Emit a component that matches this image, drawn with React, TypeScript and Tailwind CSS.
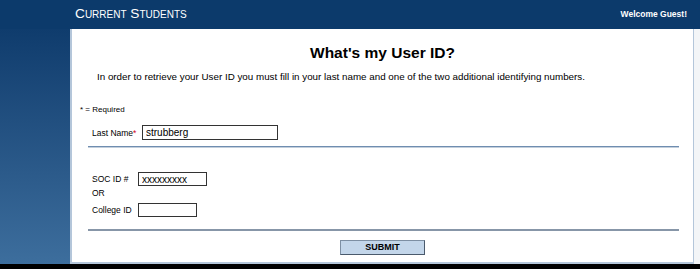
import React, { useState } from 'react';

export default function App() {
  const [lastName, setLastName] = useState('strubberg');
  const [socId, setSocId] = useState('xxxxxxxxx');
  const [collegeId, setCollegeId] = useState('');

  return (
    <div className="w-[700px] h-[269px] flex flex-col bg-black font-['Liberation_Sans',Arial,sans-serif] [font-variant-ligatures:none] overflow-hidden">
      {/* header bar */}
      <header className="h-[29px] shrink-0 bg-[#0c3a6b] flex items-center justify-between pl-[75px] pr-[13px]">
        <span className="text-white text-[13.7px] [font-variant:small-caps] leading-none mt-[-2px]">Current Students</span>
        <span className="text-white text-[8.5px] font-bold">Welcome Guest!</span>
      </header>

      <div className="flex h-[235px] shrink-0">
        {/* left gradient column */}
        <div className="w-[70px] shrink-0 bg-gradient-to-b from-[#0f3c6d] to-[#3d6e9d]" />

        {/* main panel */}
        <main className="flex-1 bg-white border-l-2 border-b-2 border-r border-[#b4c6da] flex flex-col text-black">
          <h1 className="text-center font-bold text-[15.5px] leading-none mt-[16px]">What's my User ID?</h1>
          <p className="text-[9.8px] mt-[11px] ml-[25px] leading-none">
            In order to retrieve your User ID you must fill in your last name and one of the two additional identifying numbers.
          </p>

          <div className="text-[8px] ml-[8px] mt-[25px] leading-none">* = Required</div>

          <div className="flex items-center ml-[20px] mt-[11px]">
            <label className="text-[8.5px] w-[50px] leading-none">
              Last Name<span className="text-[#d0021b]">*</span>
            </label>
            <input
              value={lastName}
              onChange={(e) => setLastName(e.target.value)}
              className="w-[136px] h-[15px] border border-[#333] px-[3px] text-[10px] outline-none"
            />
          </div>

          <div className="mr-[14px] ml-[16px] mt-[6px] h-[2px] bg-[#6f8db0] border-b border-[#c3cfdc]" />

          <div className="flex items-center ml-[20px] mt-[24px]">
            <label className="text-[8.5px] w-[46px] leading-none">SOC ID #</label>
            <input
              value={socId}
              onChange={(e) => setSocId(e.target.value)}
              className="w-[69px] h-[14px] border border-[#333] px-[3px] text-[10px] outline-none"
            />
          </div>
          <div className="text-[8.5px] ml-[20px] mt-[3px] leading-none">OR</div>
          <div className="flex items-center ml-[20px] mt-[5px]">
            <label className="text-[8.5px] w-[46px] leading-none">College ID</label>
            <input
              value={collegeId}
              onChange={(e) => setCollegeId(e.target.value)}
              className="w-[59px] h-[14px] border border-[#333] px-[3px] text-[10px] outline-none"
            />
          </div>

          <div className="mr-[14px] ml-[16px] mt-[12px] h-[2px] bg-[#8796a8]" />

          <div className="flex justify-center mt-[9px]">
            <button className="w-[85px] h-[15px] bg-[#c3d6ea] border border-[#7d8fa3] border-b-[#4a5a6c] border-r-[#4a5a6c] text-[9px] font-bold leading-none">
              SUBMIT
            </button>
          </div>
        </main>

        <div className="w-[6px] shrink-0 bg-[#f3f5f7]" />
      </div>
    </div>
  );
}
